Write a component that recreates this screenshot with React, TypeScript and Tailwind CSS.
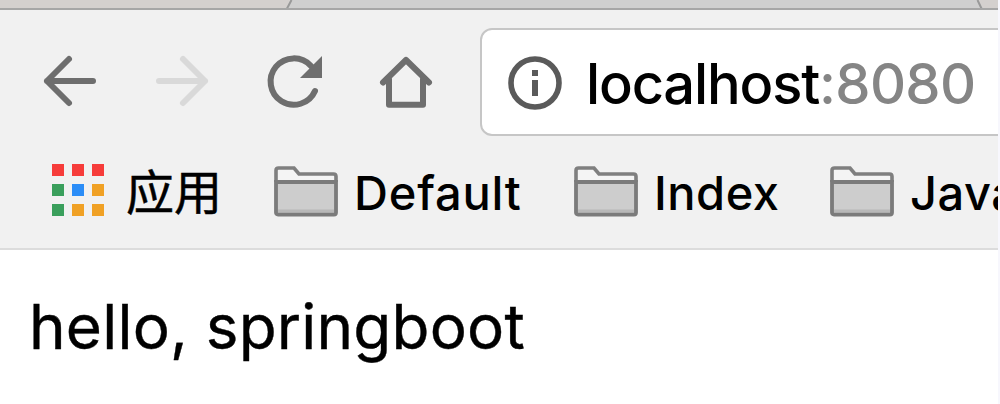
import type { ReactNode } from "react";

function Folder() {
  return (
    <svg width="64" height="52" viewBox="0 0 64 52" fill="none" className="mt-[1.500px] block shrink-0">
      <path d="M2 16V4.500Q2 2 4.500 2H20L25 8H59.500Q62 8 62 10.500V16" fill="#f4f4f4" stroke="#7f7f7f" strokeWidth="3.600" />
      <path d="M2 16H62V46.500Q62 48.500 60 48.500H4Q2 48.500 2 46.500Z" fill="#cdcdcd" stroke="#7b7b7b" strokeWidth="3.800" />
      <path d="M4 45H60" stroke="#b8b8b8" strokeWidth="3" />
    </svg>
  );
}

function Bookmark({ children, className }: { children: ReactNode; className: string }) {
  return (
    <div className={`flex shrink-0 items-start ${className}`}>
      <Folder />
      {children}
    </div>
  );
}

export default function App() {
  return (
    <div className="flex h-[404px] w-[1000px] overflow-hidden bg-[#f7f7fd] font-['Inter','Noto_Sans_CJK_SC',sans-serif] text-black">
      <div className="flex w-[998px] flex-col overflow-hidden bg-white">
        <div className="h-[10px] shrink-0">
          <svg width="998" height="10" viewBox="0 0 998 10" className="block">
            <rect width="998" height="10" fill="#d4d0ce" />
            <path d="M291.500 0L287 8.500H983L978 0Z" fill="#cfcfcf" />
            <path d="M291.500 0L287 8.500M977.500 0L981.500 8.500" stroke="#999" strokeWidth="2" />
            <rect y="8" width="998" height="2" fill="#a6a6a6" />
          </svg>
        </div>
        <div className="flex h-[128px] shrink-0 bg-[#f1f1f1] pt-[18px]">
          <svg width="480" height="108" viewBox="0 28 480 108" fill="none" className="block shrink-0">
            <g strokeWidth="6" strokeLinecap="round" strokeLinejoin="round">
              <path d="M93 81H47M69 59L47 81L69 103" stroke="#6e6e6e" />
              <path d="M159 81H205M183 59L205 81L183 103" stroke="#d9d9d9" />
              <path d="M315 91A23.200 23.200 0 1 1 311 66" stroke="#6e6e6e" />
            </g>
            <path d="M322 56V78H300Z" fill="#6e6e6e" />
            <path d="M383 82.500L406 60L429 82.500M389 79V104.700H423V79" stroke="#6e6e6e" strokeWidth="6" strokeLinecap="round" strokeLinejoin="round" />
          </svg>
          <div className="flex h-[108px] w-[540px] shrink-0 rounded-[12px] border-2 border-[#c6c6c6] bg-white">
            <svg width="56" height="56" viewBox="0 0 56 56" fill="none" className="mt-[25px] ml-[25px] block shrink-0">
              <circle cx="28" cy="28" r="24" stroke="#5a5a5a" strokeWidth="5.600" />
              <path d="M25 15H31V21H25ZM25 25H31V41H25Z" fill="#5a5a5a" />
            </svg>
            <div className="ml-[23px] pt-[20px] text-[56px] leading-[68px] font-medium whitespace-nowrap">
              <span className="tracking-[-1.150px]">localhost</span>
              <span className="tracking-[-0.700px] text-[#858585]">:8080</span>
            </div>
          </div>
        </div>
        <div className="flex h-[112px] shrink-0 items-start border-b-2 border-[#dcdcdc] bg-[#f1f1f1] pt-[26px] pl-[52px]">
          <svg width="52" height="52" viewBox="0 0 52 52" className="block shrink-0">
            <path d="M0 0h12v12H0zM20 0h12v12H20zM40 0h12v12H40z" fill="#f63c3a" />
            <path d="M0 20h12v12H0zM0 40h12v12H0z" fill="#3a9f5c" />
            <path d="M20 20h12v12H20z" fill="#2b8df7" />
            <path d="M40 20h12v12H40zM20 40h12v12H20zM40 40h12v12H40z" fill="#f0a125" />
          </svg>
          <div className="ml-[22px] w-[148px] shrink-0 text-[48px] leading-[58px] whitespace-nowrap [-webkit-text-stroke:0.500px_black]">应用</div>
          <Bookmark className="w-[300px]">
            <span className="ml-[16px] text-[47px] leading-[57px] font-medium tracking-[0.800px]">Default</span>
          </Bookmark>
          <Bookmark className="w-[256px]">
            <span className="ml-[16px] text-[47px] leading-[57px] font-medium tracking-[0.500px]">Index</span>
          </Bookmark>
          <Bookmark className="w-[256px]">
            <span className="ml-[16px] text-[47px] leading-[57px] font-medium tracking-[0.500px]">Java</span>
          </Bookmark>
        </div>
        <main className="flex-1 pt-[39px] pl-[29px]">
          <p className="text-[62px] leading-[76px] tracking-[0.200px] whitespace-nowrap [-webkit-text-stroke:0.400px_black]">hello, springboot</p>
        </main>
      </div>
    </div>
  );
}
